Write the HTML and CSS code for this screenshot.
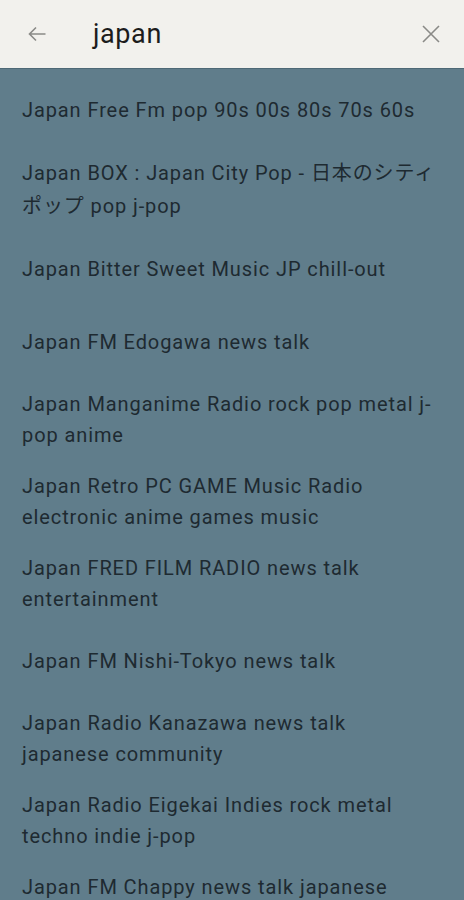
FILE: index.html
```html
<!DOCTYPE html>
<html lang="en">
<head>
    <meta charset="UTF-8">
    <meta name="viewport" content="width=device-width, initial-scale=1.0">
    <title>Search</title>
    <link rel="stylesheet" href="styles.css">
</head>
<body>

    <div class="search-bar">
        <button class="icon-btn back" aria-label="Back">
            <svg width="24" height="24" viewBox="0 0 24 24"><path d="M20.5 12H4.5M11 5.5L4.5 12l6.5 6.5" fill="none" stroke="#8a8a87" stroke-width="1.6"/></svg>
        </button>
        <div class="query">japan</div>
        <button class="icon-btn clear" aria-label="Clear">
            <svg width="24" height="24" viewBox="0 0 24 24"><path d="M4 4L20 20M20 4L4 20" fill="none" stroke="#8a8a87" stroke-width="1.6"/></svg>
        </button>
    </div>

    <ul class="results">
        <li>Japan Free Fm pop 90s 00s 80s 70s 60s</li>
        <li class="cjk">Japan BOX : Japan City Pop - 日本のシティポップ pop j-pop</li>
        <li>Japan Bitter Sweet Music JP chill-out</li>
        <li>Japan FM Edogawa news talk</li>
        <li>Japan Manganime Radio rock pop metal j-pop anime</li>
        <li>Japan Retro PC GAME Music Radio electronic anime games music</li>
        <li>Japan FRED FILM RADIO news talk entertainment</li>
        <li>Japan FM Nishi-Tokyo news talk</li>
        <li>Japan Radio Kanazawa news talk japanese community</li>
        <li>Japan Radio Eigekai Indies rock metal techno indie j-pop</li>
        <li>Japan FM Chappy news talk japanese community</li>
    </ul>

</body>
</html>
```

FILE: styles.css
```css
body {
    margin: 0;
    font-family: Roboto, "Noto Sans CJK JP", sans-serif;
    background-color: #607d8b;
    color: #1e2a31;
    height: 900px;
    overflow: hidden;
}
.search-bar {
    display: flex;
    align-items: center;
    height: 68px;
    background: #f2f1ed;
    border-bottom: 1px solid #4e6976;
}
.icon-btn {
    background: none;
    border: none;
    padding: 0;
    width: 24px;
    height: 24px;
    display: flex;
    align-items: center;
    justify-content: center;
    cursor: pointer;
}
.back {
    margin-left: 25px;
}
.clear {
    margin-right: 21px;
}
.query {
    flex: 1;
    margin-left: 44px;
    font-size: 27px;
    letter-spacing: 0.6px;
    color: #1c1c1c;
}
.results {
    list-style: none;
    margin: 0;
    padding: 5px 0 0;
}
.results li {
    display: flex;
    align-items: center;
    min-height: 73px;
    box-sizing: border-box;
    padding: 10px 26px 10px 22px;
    font-size: 20px;
    line-height: 31px;
    letter-spacing: 0.9px;
}
.results li.cjk {
    line-height: 33px;
}
```
